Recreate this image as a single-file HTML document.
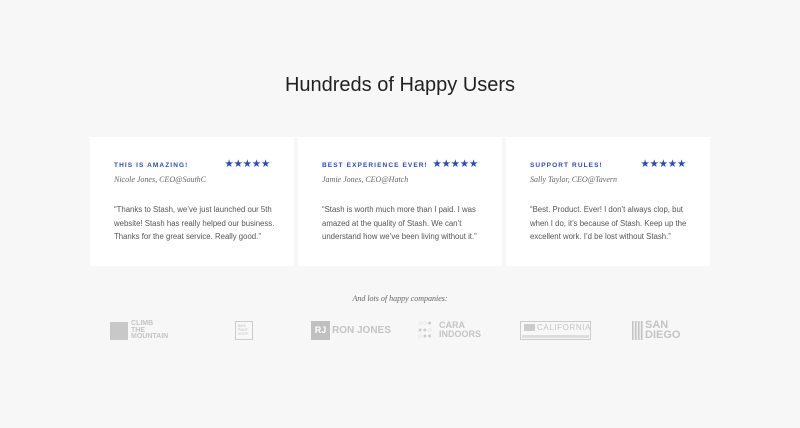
<!DOCTYPE html>
<html><head><meta charset="utf-8"><style>
*{margin:0;padding:0;box-sizing:border-box}
body{width:800px;height:428px;background:#f7f7f7;font-family:"Liberation Sans",sans-serif;position:relative;overflow:hidden;color:#555}
h1{position:absolute;top:74px;left:0;width:800px;text-align:center;font-weight:normal;font-size:20px;color:#222}
.card{position:absolute;top:137px;width:204px;height:129px;background:#fff}
.t{position:absolute;left:24px;top:25px;font-size:6.5px;font-weight:bold;letter-spacing:1.1px;color:#2748c7}
.s{position:absolute;right:24px;top:21px;font-size:10.5px;color:#2748c7;letter-spacing:-0.3px}
.n{position:absolute;left:24px;top:38px;font-family:"Liberation Serif",serif;font-style:italic;font-size:8px;color:#666}
.b{position:absolute;left:24px;top:66px;width:162px;font-size:7.8px;line-height:13.5px;color:#555}
.cap{position:absolute;top:294px;width:800px;text-align:center;font-family:"Liberation Serif",serif;font-style:italic;font-size:8px;color:#666}
.lg{position:absolute;color:#c4c4c4;font-weight:bold}
</style></head><body>
<h1>Hundreds of Happy Users</h1>
<div class="card" style="left:90px"><div class="t">THIS IS AMAZING!</div><div class="s">★★★★★</div><div class="n">Nicole Jones, CEO@SouthC</div><div class="b">“Thanks to Stash, we’ve just launched our 5th website! Stash has really helped our business. Thanks for the great service. Really good.”</div></div>
<div class="card" style="left:298px"><div class="t">BEST EXPERIENCE EVER!</div><div class="s">★★★★★</div><div class="n">Jamie Jones, CEO@Hatch</div><div class="b">“Stash is worth much more than I paid. I was amazed at the quality of Stash. We can’t understand how we’ve been living without it.”</div></div>
<div class="card" style="left:506px"><div class="t">SUPPORT RULES!</div><div class="s">★★★★★</div><div class="n">Sally Taylor, CEO@Tavern</div><div class="b">“Best. Product. Ever! I don’t always clop, but when I do, it’s because of Stash. Keep up the excellent work. I’d be lost without Stash.”</div></div>
<div class="cap">And lots of happy companies:</div>

<div class="lg" style="left:110px;top:322px;width:18px;height:18px;background:#c8c8c8"></div>
<div class="lg" style="left:131px;top:321px;font-size:7px;line-height:6.5px">CLIMB<br>THE<br>MOUNTAIN</div>

<div class="lg" style="left:235px;top:321px;width:18px;height:19px;border:1px solid #ccc;font-size:3.5px;line-height:4px;padding:2px;font-weight:normal">BIKE<br>PAINT<br>SHOP</div>

<div class="lg" style="left:311px;top:321px;width:19px;height:19px;background:#c0c0c0;color:#fff;font-size:9px;line-height:19px;text-align:center">RJ</div>
<div class="lg" style="left:332px;top:325px;font-size:10px">RON JONES</div>

<div class="lg" style="left:418px;top:321px;font-size:7px;line-height:6.5px;letter-spacing:0.5px;color:#ccc">○○●<br>●●○<br>○●●</div>
<div class="lg" style="left:439px;top:321px;font-size:9px;line-height:8.5px">CARA<br>INDOORS</div>

<div class="lg" style="left:520px;top:321px;width:71px;height:19px;border:1px solid #ccc"></div>
<div class="lg" style="left:524px;top:324px;width:11px;height:7px;background:#ccc"></div>
<div class="lg" style="left:537px;top:323px;font-size:8px;font-weight:normal;letter-spacing:0.6px">CALIFORNIA</div>
<div class="lg" style="left:522px;top:335px;width:67px;height:3px;background:#ddd"></div>

<div class="lg" style="left:632px;top:321px;width:11px;height:19px;background:repeating-linear-gradient(90deg,#c4c4c4 0 1.5px,#eee 1.5px 3px)"></div>
<div class="lg" style="left:645px;top:320px;font-size:11px;line-height:10px">SAN<br>DIEGO</div>
</body></html>
